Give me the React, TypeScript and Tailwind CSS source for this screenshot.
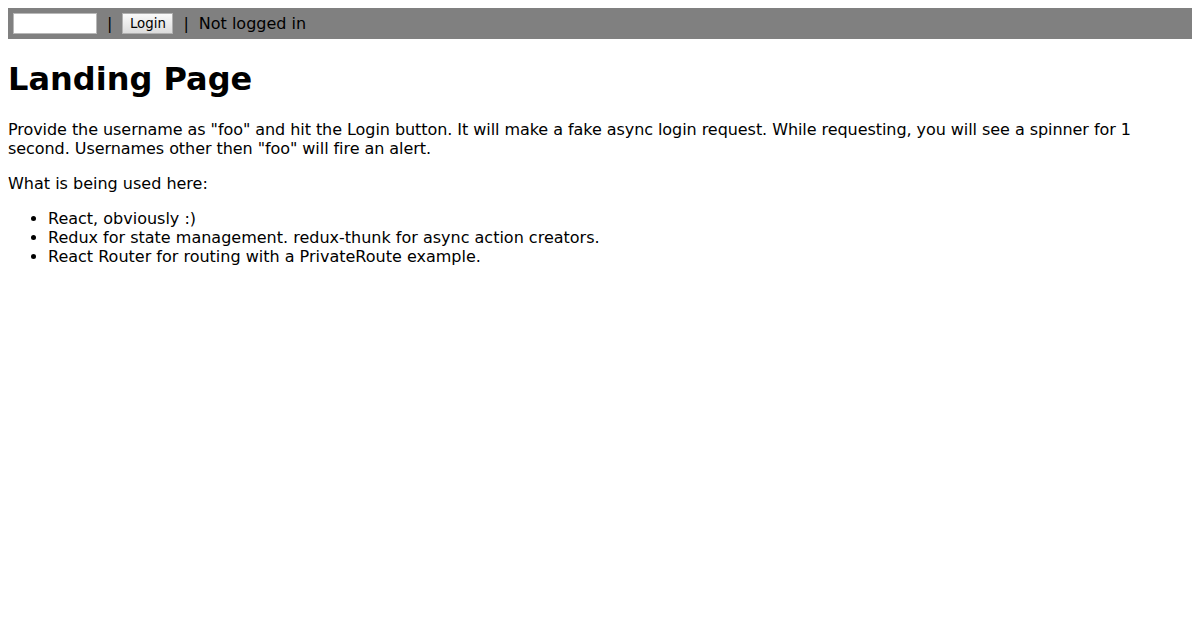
export default function App() {
  return (
    <div className="min-h-screen bg-white p-2 text-[16px] leading-[normal] text-black font-['DejaVu_Sans',sans-serif]">
      <div className="flex h-[31px] items-center bg-[#808080] px-[5px]">
        <input
          type="text"
          className="h-[21px] w-[84px] border border-[#b8b8b8] bg-white px-1 text-[13.33px] outline-none"
        />
        <span className="mx-[10px]">|</span>
        <button className="h-[21px] w-[51px] border border-[#b0b0b0] bg-gradient-to-b from-[#fafafa] to-[#dcdcdc] text-[13.33px]">
          Login
        </button>
        <span className="mx-[10px]">|</span>
        <span>Not logged in</span>
      </div>

      <h1 className="my-[21.44px] text-[32px] font-bold">Landing Page</h1>

      <p className="my-4 tracking-[-0.06px]">
        Provide the username as "foo" and hit the Login button. It will make a fake async login request. While
        requesting, you will see a spinner for 1 second. Usernames other then "foo" will fire an alert.
      </p>

      <p className="my-4">What is being used here:</p>

      <ul className="my-4 list-disc pl-10">
        <li>React, obviously :)</li>
        <li>Redux for state management. redux-thunk for async action creators.</li>
        <li>React Router for routing with a PrivateRoute example.</li>
      </ul>
    </div>
  )
}
